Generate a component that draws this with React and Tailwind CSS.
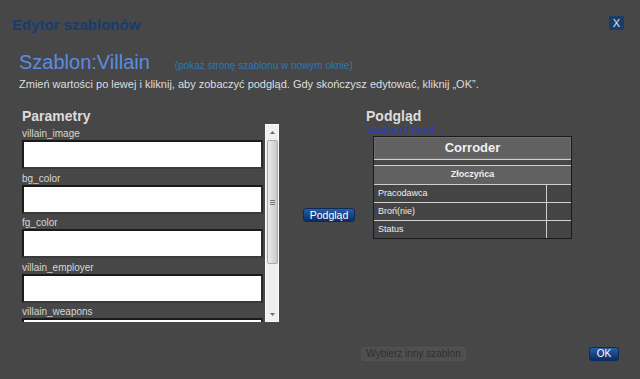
import React from "react";

const fields = ["villain_image", "bg_color", "fg_color", "villain_employer", "villain_weapons"];

function Scrollbar() {
  return (
    <div className="relative w-[14px] h-[198px] bg-[#efefef] border border-[#fafafa]">
      <svg className="absolute left-[4px] top-[6px]" width="5" height="3" viewBox="0 0 5 3">
        <polygon points="2.5,0 5,3 0,3" fill="#6a6a6a" />
      </svg>
      <div className="absolute left-[1px] top-[15px] w-[11px] h-[124px] rounded-[2px] border border-[#a9a9a9] bg-gradient-to-r from-[#ececec] to-[#c9c9c9] flex items-center justify-center">
        <div className="flex flex-col gap-[1px]">
          <div className="w-[5px] h-[1px] bg-[#777]" />
          <div className="w-[5px] h-[1px] bg-[#777]" />
          <div className="w-[5px] h-[1px] bg-[#777]" />
        </div>
      </div>
      <svg className="absolute left-[4px] bottom-[5px]" width="5" height="3" viewBox="0 0 5 3">
        <polygon points="0,0 5,0 2.5,3" fill="#6a6a6a" />
      </svg>
    </div>
  );
}

function Row({ label }) {
  return (
    <div className="flex h-[17px]">
      <div className="w-[172px] pl-[4px] flex items-center text-[9px] text-[#eeeeee]">{label}</div>
      <div className="w-[1px] bg-[#cfcfcf]" />
      <div className="flex-1" />
    </div>
  );
}

export default function App() {
  return (
    <div className="w-[640px] h-[379px] bg-[#474747] overflow-hidden flex flex-col font-['Liberation_Sans',Arial,sans-serif]">
      {/* header */}
      <div className="flex items-start justify-between pl-[12px] pr-[16px] pt-[16px]">
        <div className="h-[17px] leading-[17px] text-[15px] font-bold text-[#173d6f]">Edytor szablonów</div>
        <div className="w-[15px] h-[14px] bg-[#1c3c68] rounded-[1px] flex items-center justify-center text-[11px] leading-none text-[#e6e6e6]">X</div>
      </div>

      {/* template name */}
      <div className="mt-[18px] pl-[19px] flex items-baseline h-[23px]">
        <span className="text-[20px] leading-[23px] text-[#5b8de0]">Szablon:Villain</span>
        <span className="ml-[25px] text-[10px] leading-[12px] text-[#2a78b6]">(pokaż stronę szablonu w nowym oknie)</span>
      </div>

      <div className="mt-[4px] pl-[19px] h-[13px] text-[11px] leading-[13px] text-[#dedede]">
        Zmień wartości po lewej i kliknij, aby zobaczyć podgląd. Gdy skończysz edytować, kliknij „OK”.
      </div>

      {/* main */}
      <div className="mt-[18px] pl-[22px] flex items-start">
        {/* left */}
        <div className="w-[257px] flex flex-col">
          <div className="h-[15px] leading-[15px] text-[14px] font-bold text-[#dcdcdc]">Parametry</div>
          <div className="flex h-[198px]">
            <div className="w-[241px] h-[198px] overflow-hidden pt-[4px]">
              {fields.map((f) => (
                <div key={f} className="mb-[3.5px]">
                  <div className="h-[12px] leading-[12px] text-[10px] text-[#d6d6d6]">{f}</div>
                  <div className="h-[29px] bg-white border-2 border-t-[#1a1a1a] border-l-[#1a1a1a] border-r-[#2a2a2a] border-b-[#3a3a3a]" />
                </div>
              ))}
            </div>
            <div className="ml-[2px]">
              <Scrollbar />
            </div>
          </div>
        </div>

        {/* middle button */}
        <div className="ml-[24px] mt-[99px] w-[52px] h-[14px] rounded-[3px] border border-[#0c2a5a] bg-gradient-to-b from-[#2a5ea6] to-[#0a2d68] flex items-center justify-center text-[10.5px] leading-none text-white">
          Podgląd
        </div>

        {/* right */}
        <div className="ml-[11px] flex flex-col">
          <div className="h-[15px] leading-[15px] text-[14px] font-bold text-[#dcdcdc]">Podgląd</div>
          <div className="h-[11px] leading-[11px] text-[10px] text-[#2a40c8]">Szablon:Parent</div>
          <div className="ml-[7px] mt-[1px] w-[199px] border border-[#1a1a1a] bg-[#444444] flex flex-col">
            <div className="h-[22px] bg-[#616161] border border-[#6e6e6e] flex items-center justify-center text-[13px] font-bold text-[#f0f0f0]">
              Corroder
            </div>
            <div className="h-[1px] bg-[#cfcfcf]" />
            <div className="h-[5px] bg-[#474747]" />
            <div className="h-[1px] bg-[#cfcfcf]" />
            <div className="h-[18px] bg-[#616161] flex items-center justify-center text-[9px] font-bold text-[#eeeeee]">
              Złoczyńca
            </div>
            <div className="h-[1px] bg-[#cfcfcf]" />
            <Row label="Pracodawca" />
            <div className="h-[1px] bg-[#cfcfcf]" />
            <Row label="Broń(nie)" />
            <div className="h-[1px] bg-[#cfcfcf]" />
            <Row label="Status" />
          </div>
        </div>
      </div>

      {/* footer */}
      <div className="mt-[25px] flex items-start">
        <div className="ml-[361px] w-[105px] h-[14px] rounded-[3px] bg-[#4f4f4f] border border-[#525252] flex items-center justify-center text-[10px] leading-none text-[#2f2f2f]">
          Wybierz inny szablon
        </div>
        <div className="ml-auto mr-[21px] w-[30px] h-[14px] rounded-[3px] border border-[#0c2a5a] bg-gradient-to-b from-[#2a5ea6] to-[#0a2d68] flex items-center justify-center text-[10px] leading-none text-white">
          OK
        </div>
      </div>
    </div>
  );
}
